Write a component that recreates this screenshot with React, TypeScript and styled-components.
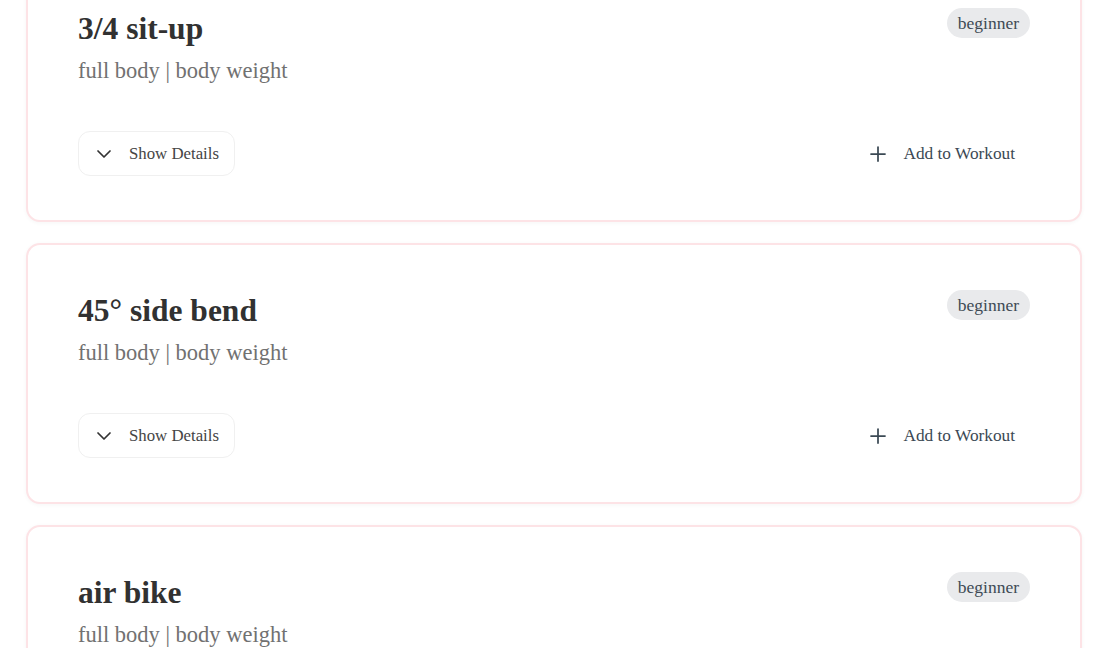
import React from "react";
import styled, { createGlobalStyle } from "styled-components";
import { ChevronDown, Plus } from "lucide-react";

const GlobalStyle = createGlobalStyle`
  html, body {
    margin: 0;
    padding: 0;
    background: #ffffff;
  }
  body {
    font-family: "Liberation Serif", "DejaVu Serif", serif;
    overflow: hidden;
  }
`;

const Page = styled.div`
  display: flex;
  flex-direction: column;
  gap: 21px;
  width: 1056px;
  margin: -39px 0 0 26px;
`;

const Card = styled.article`
  box-sizing: border-box;
  height: 261px;
  border: 2px solid #fde3e6;
  border-radius: 14px;
  background: #ffffff;
  box-shadow: 0 1px 4px rgba(0, 0, 0, 0.04);
  padding: 46px 50px 44px 50px;
  display: flex;
  flex-direction: column;
`;

const Header = styled.div`
  display: flex;
  justify-content: space-between;
  align-items: flex-start;
`;

const TitleBlock = styled.div`
  display: flex;
  flex-direction: column;
`;

const Title = styled.h2`
  margin: 0;
  font-size: 31.5px;
  line-height: 40px;
  font-weight: 700;
  color: #313131;
`;

const Subtitle = styled.p`
  margin: 6px 0 0 0;
  font-size: 22.5px;
  line-height: 32px;
  color: #717171;
`;

const Badge = styled.span`
  margin-top: -1px;
  height: 30px;
  padding: 0 11px;
  border-radius: 15px;
  background: #e9eaec;
  color: #3e4a55;
  font-size: 17.5px;
  line-height: 30px;
  white-space: nowrap;
`;

const Footer = styled.div`
  margin-top: auto;
  display: flex;
  justify-content: space-between;
  align-items: center;
`;

const DetailsButton = styled.button`
  box-sizing: border-box;
  height: 45px;
  display: flex;
  align-items: center;
  gap: 13px;
  padding: 0 15px 0 13px;
  border: 1px solid #f0f0f0;
  border-radius: 12px;
  background: #ffffff;
  color: #454545;
  font-family: inherit;
  font-size: 16.8px;
  cursor: pointer;
`;

const AddButton = styled.button`
  box-sizing: border-box;
  height: 45px;
  display: flex;
  align-items: center;
  gap: 13px;
  padding: 0 15px 0 15px;
  border: none;
  background: transparent;
  color: #3b4954;
  font-family: inherit;
  font-size: 17.3px;
  cursor: pointer;
`;

const exercises = [
  { name: "3/4 sit-up", meta: "full body | body weight", level: "beginner" },
  { name: "45° side bend", meta: "full body | body weight", level: "beginner" },
  { name: "air bike", meta: "full body | body weight", level: "beginner" },
];

export default function App() {
  return (
    <>
      <GlobalStyle />
      <Page>
        {exercises.map((ex) => (
          <Card key={ex.name}>
            <Header>
              <TitleBlock>
                <Title>{ex.name}</Title>
                <Subtitle>{ex.meta}</Subtitle>
              </TitleBlock>
              <Badge>{ex.level}</Badge>
            </Header>
            <Footer>
              <DetailsButton>
                <ChevronDown size={24} strokeWidth={1.75} color="#333" />
                Show Details
              </DetailsButton>
              <AddButton>
                <Plus size={24} strokeWidth={1.75} color="#3b4954" />
                Add to Workout
              </AddButton>
            </Footer>
          </Card>
        ))}
      </Page>
    </>
  );
}
